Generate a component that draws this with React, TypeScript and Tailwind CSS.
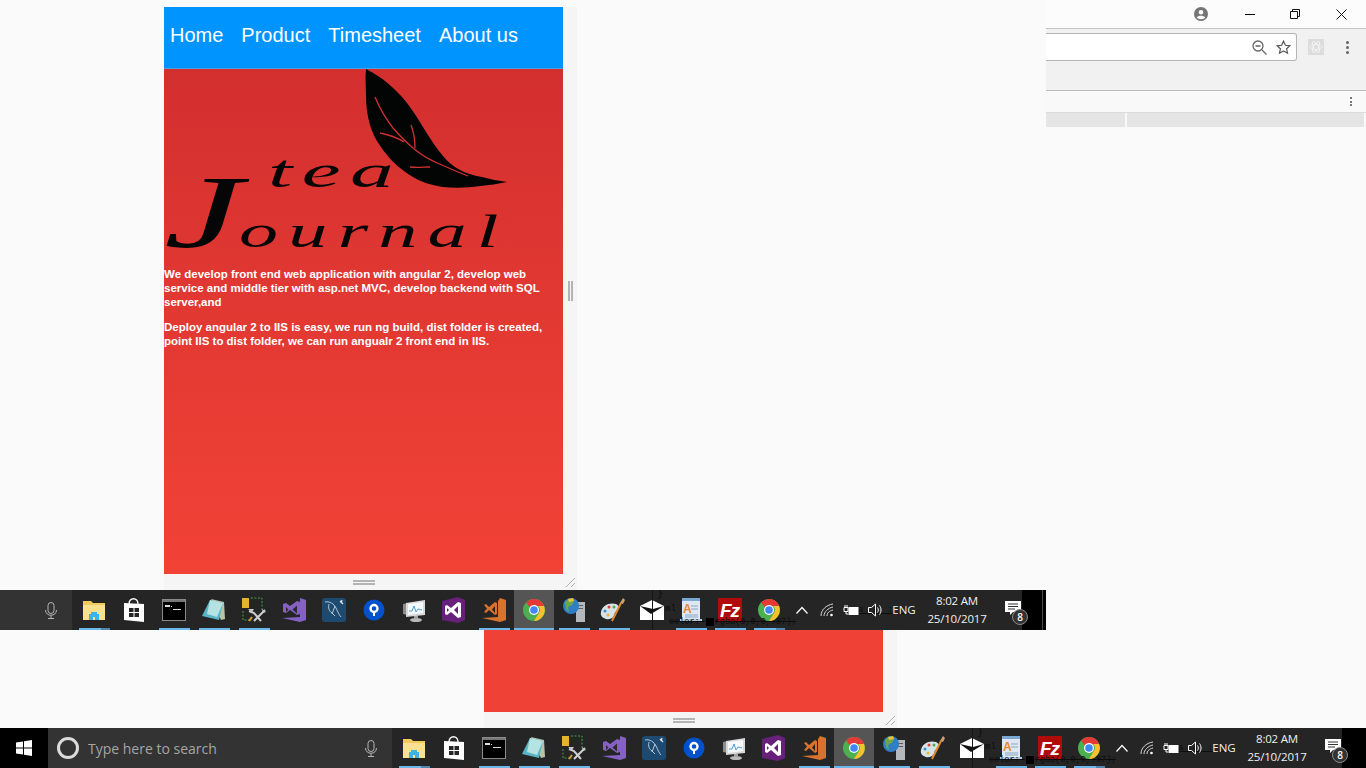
import React from 'react';

const Folder = () => (
  <svg width="24" height="24" viewBox="0 0 24 24">
    <path d="M1 3h8l2 2h12v15H1z" fill="#f3c95a" />
    <path d="M1 7h22v15H1z" fill="#fbe08f" />
    <path d="M7 22v-6h2v-2h6v2h2v6h-4v-3h-2v3z" fill="#3fb2e6" />
  </svg>
);

const Store = () => (
  <svg width="24" height="26" viewBox="0 0 24 26">
    <path d="M7 7c0-7 9-7 9 0" fill="none" stroke="#fff" strokeWidth="1.4" />
    <path d="M2 6l20 1v18L2 23z" fill="#fff" />
    <path d="M7 11h4.500v4H7zM12.500 11H17v4h-4.500zM7 16h4.500v4H7zM12.500 16H17v4h-4.500z" fill="#262626" />
  </svg>
);

const Cmd = () => (
  <svg width="24" height="22" viewBox="0 0 24 22">
    <rect x="0.500" y="0.500" width="23" height="21" fill="#000" stroke="#8a8a8a" />
    <rect x="1" y="1" width="22" height="2" fill="#777" />
    <path d="M3 6h5v2H3zM9 7h1v1H9zM11 10h8v1h-8z" fill="#ddd" />
  </svg>
);

const Notepad = () => (
  <svg width="26" height="24" viewBox="0 0 26 24">
    <path d="M10 1l13 3 1 17-4 1z" fill="#b9c3a5" />
    <path d="M9 2l13 3-4 17L1 18z" fill="#58b5c4" />
    <path d="M9 2l13 3-6 14-10-3z" fill="#b5e2e3" />
  </svg>
);

const Tools = () => (
  <svg width="26" height="26" viewBox="0 0 26 26">
    <rect x="1" y="1" width="7" height="10" fill="#e8b42c" />
    <path d="M10 1h11v12M2 14v9h9" fill="none" stroke="#3fa33f" strokeWidth="1" strokeDasharray="2 1.500" />
    <path d="M8 14l5 2 7 8M24 13l-11 11" fill="none" stroke="#cfcfcf" strokeWidth="2" />
    <path d="M7 12h6l-2 3zM21 12l4 3-3 1z" fill="#c9c9c9" />
    <path d="M11 20l-3 4" stroke="#d79a3a" strokeWidth="2" />
  </svg>
);

const VsPurple = () => (
  <svg width="25" height="24" viewBox="0 0 25 24">
    <path d="M18 0l6 2v20l-6 2L0 20l18-1z" fill="#8661c5" />
    <path d="M1 6l3-1 4 3 7-5 3 1v12l-3 1-7-5-4 3-3-1z" fill="#8661c5" />
    <path d="M4 9v5l2.500-2.500zM15 7.500l-4.500 4 4.500 4z" fill="#2a2a2a" />
  </svg>
);

const MySql = () => (
  <svg width="24" height="24" viewBox="0 0 24 24">
    <rect width="24" height="24" rx="3" fill="#1d4a70" />
    <path d="M3 4c5-1 9 2 11 6s3 7 5 9M7 6c-1 4 0 7 3 9M10 15l3 3M13 8l-3 8" fill="none" stroke="#c9d6df" strokeWidth="0.900" />
    <path d="M18 3l3 3M20 2l-1 3" stroke="#e4e4e4" strokeWidth="1.300" />
  </svg>
);

const SourceTree = () => (
  <svg width="22" height="22" viewBox="0 0 22 22">
    <circle cx="11" cy="11" r="10.500" fill="#0052cc" />
    <circle cx="11" cy="9.500" r="3.500" fill="none" stroke="#fff" strokeWidth="2.400" />
    <rect x="10" y="12" width="2" height="5" fill="#fff" />
  </svg>
);

const PerfMon = () => (
  <svg width="24" height="24" viewBox="0 0 24 24">
    <path d="M1 6l5-1v12l-5-1z" fill="#8c8c8c" />
    <path d="M4 5l19-3v15L4 19z" fill="#d8d8d8" />
    <path d="M6 6l15-2v11L6 17z" fill="#f4f8fb" />
    <path d="M7 13l3 0 2-5 2 6 2-3 4 1" fill="none" stroke="#3c93d0" strokeWidth="0.900" />
    <ellipse cx="14" cy="22" rx="6" ry="2" fill="#b9b9b9" />
    <rect x="12" y="18" width="4" height="3" fill="#a5a5a5" />
  </svg>
);

const VsDark = () => (
  <svg width="24" height="26" viewBox="0 0 24 26">
    <path d="M0 4l16-4 7 3v20l-7 3-16-3z" fill="#68217a" />
    <path d="M16 5l-7 6-4-3-2 1v8l2 1 4-3 7 6 3-1V6zM5 11l2 2-2 2zM16 9v8l-4-4z" fill="#fff" fillRule="evenodd" />
  </svg>
);

const VsOrange = () => (
  <svg width="25" height="24" viewBox="0 0 25 24">
    <path d="M18 0l6 2v20l-6 2L0 20l16-1V3z" fill="#d9722c" />
    <path d="M2 7l2-1 3 3 6-5 2 1v11l-2 1-6-5-3 3-2-1 3-3.500z" fill="#d9722c" />
    <path d="M13 8l-3 3.500 3 3.500z" fill="#252525" />
  </svg>
);

const Chrome = () => (
  <svg width="22" height="22" viewBox="0 0 22 22">
    <circle cx="11" cy="11" r="11" fill="#4caf50" />
    <path d="M11 0a11 11 0 0 1 9.500 5.500L20.500 7H11a4 4 0 0 0-3.500 2L3 3.500A11 11 0 0 1 11 0z" fill="#e53935" />
    <path d="M21 7a11 11 0 0 1-10 15l5-8a5 5 0 0 0-1-7z" fill="#fbc02d" />
    <circle cx="11" cy="11" r="5" fill="#fff" />
    <circle cx="11" cy="11" r="3.800" fill="#4285f4" />
  </svg>
);

const Globe = () => (
  <svg width="24" height="24" viewBox="0 0 24 24">
    <rect x="14" y="4" width="9" height="20" fill="#b4b9bd" />
    <rect x="16" y="7" width="5" height="1" fill="#5a5f63" />
    <rect x="16" y="10" width="5" height="1" fill="#5a5f63" />
    <circle cx="9" cy="8" r="8" fill="#2f7fc4" />
    <path d="M3 4c3-3 7-3 9-1l-2 4-4 2 1 5-3-3z" fill="#6aa84f" />
    <path d="M6 1l5-1 1 3-5 1z" fill="#f2c230" />
  </svg>
);

const Palette = () => (
  <svg width="26" height="26" viewBox="0 0 26 26">
    <path d="M1 15C2 8 10 5 16 7c4 2 3 5 1 7-3 1-2 3-3 5s-5 4-8 3-6-3-5-7z" fill="#d6e4ea" />
    <circle cx="5" cy="14" r="1.500" fill="#3c8dc5" />
    <circle cx="9" cy="10" r="1.500" fill="#d8433a" />
    <circle cx="14" cy="10" r="1.500" fill="#5aa845" />
    <circle cx="8" cy="18" r="1.500" fill="#e7b530" />
    <path d="M12 24L21 6" stroke="#e38a2c" strokeWidth="2" />
    <path d="M20 6l3-5 2 2-2 4z" fill="#c9a36b" />
  </svg>
);

const Mail = () => (
  <svg width="24" height="20" viewBox="0 0 24 20">
    <path d="M0 6l12-6 12 6v14H0z" fill="#fff" />
    <path d="M0 6l11 8 13-8-11 3z" fill="#111" />
  </svg>
);

const WordPad = () => (
  <svg width="22" height="24" viewBox="0 0 22 24">
    <rect x="2" y="0" width="18" height="22" fill="#dfe8f2" />
    <rect x="2" y="0" width="18" height="3" fill="#7aa7d4" />
    <path d="M11 8h7M11 11h7M5 17h13M5 19h13" stroke="#8aa7c4" />
    <text x="3" y="15" fontSize="12" fontWeight="700" fill="#e8862c" fontFamily="'Liberation Sans', sans-serif">A</text>
    <rect x="0" y="21" width="22" height="3" fill="#b4c8dc" />
  </svg>
);

const FileZilla = () => (
  <div className="w-[24px] h-[24px] bg-[#b00b0b] flex items-center justify-center overflow-hidden font-['Liberation_Sans',sans-serif] italic font-bold text-white text-[19px] leading-none tracking-[-1px]">
    Fz
  </div>
);

const Mic = () => (
  <svg width="12" height="17" viewBox="0 0 12 17" fill="none" stroke="#b5b5b5">
    <rect x="3" y="0.500" width="6" height="11" rx="3" />
    <path d="M0.500 8c0 7 11 7 11 0M6 13.500v3M3 16.500h6" />
  </svg>
);

type Cell = {
  icon: React.ReactNode;
  width: string;
  mark?: 'line' | 'split' | 'active';
};

const cells: Cell[] = [
  { icon: <Folder />, width: 'w-[40px]', mark: 'split' },
  { icon: <Store />, width: 'w-[40px]' },
  { icon: <Cmd />, width: 'w-[40px]', mark: 'line' },
  { icon: <Notepad />, width: 'w-[40px]', mark: 'line' },
  { icon: <Tools />, width: 'w-[40px]', mark: 'line' },
  { icon: <VsPurple />, width: 'w-[40px]' },
  { icon: <MySql />, width: 'w-[40px]' },
  { icon: <SourceTree />, width: 'w-[40px]' },
  { icon: <PerfMon />, width: 'w-[40px]' },
  { icon: <VsDark />, width: 'w-[40px]' },
  { icon: <VsOrange />, width: 'w-[40px]', mark: 'line' },
  { icon: <Chrome />, width: 'w-[40px]', mark: 'active' },
  { icon: <Globe />, width: 'w-[40px]', mark: 'line' },
  { icon: <Palette />, width: 'w-[38px]', mark: 'line' },
  { icon: <Mail />, width: 'w-[39px]' },
  { icon: <WordPad />, width: 'w-[39px]', mark: 'line' },
  { icon: <FileZilla />, width: 'w-[39px]', mark: 'line' },
  { icon: <Chrome />, width: 'w-[39px]', mark: 'split' },
];

const TaskbarCell = ({ cell }: { cell: Cell }) => (
  <div
    className={`${cell.width} relative h-[40px] shrink-0 flex items-center justify-center ${
      cell.mark === 'active' ? 'bg-[#555555]' : ''
    }`}
  >
    {cell.icon}
    {cell.mark === 'line' && (
      <span className="absolute bottom-0 left-[5px] w-[31px] h-[2px] bg-[#6bb6ea]" />
    )}
    {cell.mark === 'split' && (
      <span className="absolute bottom-0 left-[5px] w-[31px] h-[2px] bg-[#6bb6ea] border-r-[9px] border-[#4f87ae]" />
    )}
    {cell.mark === 'active' && (
      <span className="absolute bottom-0 left-0 w-full h-[2px] bg-[#6bb6ea]" />
    )}
  </div>
);

const Tray = () => (
  <div className="relative z-10 ml-[1px] flex items-center h-[40px] text-white font-['Open_Sans',sans-serif] text-[11.5px]">
    <div className="w-[26px] flex justify-center">
      <svg width="12" height="8" viewBox="0 0 12 8" fill="none" stroke="#fff" strokeWidth="1.200">
        <path d="M0.500 7.500L6 1.500l5.500 6" />
      </svg>
    </div>
    <div className="w-[24px] flex justify-center">
      <svg width="14" height="14" viewBox="0 0 14 14" fill="none" stroke="#d8d8d8">
        <path d="M1 13C1 7 6 2 13 1M4 13c0-4 4-8 9-9M7 13c0-3 2-5 6-6" />
        <circle cx="11.500" cy="12" r="1.300" fill="#fff" stroke="none" />
      </svg>
    </div>
    <div className="w-[24px] flex justify-center">
      <svg width="16" height="12" viewBox="0 0 16 12" fill="none" stroke="#fff">
        <path d="M1 3.500h4v4H1zM2 1v2.500M4 1v2.500M3 7.500V10h2" />
        <rect x="6" y="3.500" width="9" height="7" fill="#fff" />
      </svg>
    </div>
    <div className="w-[24px] flex justify-center">
      <svg width="15" height="14" viewBox="0 0 15 14" fill="none" stroke="#fff">
        <path d="M0.500 4.500h3l4-3.500v12l-4-3.500h-3zM9.500 4.500c1 1.500 1 3.500 0 5M11.500 2.500c2 2.500 2 6.500 0 9" />
      </svg>
    </div>
    <div className="w-[34px] text-center text-[#f0f0f0]">ENG</div>
    <div className="w-[72px] text-center leading-[18px] tracking-[-0.2px] text-[#f0f0f0]">
      <div>8:02 AM</div>
      <div>25/10/2017</div>
    </div>
    <div className="relative w-[29px] h-[40px] flex items-center pl-[12px]">
      <svg width="16" height="14" viewBox="0 0 16 14" className="-mt-[4px]">
        <path d="M0 0h16v11H8l-3 3v-3H0z" fill="#fff" />
        <path d="M3 3h10M3 5.500h10M3 8h7" stroke="#333" />
      </svg>
      <span className="absolute left-[19px] top-[19px] w-[16px] h-[16px] rounded-full bg-[#333333] border border-[#8a8a8a] flex items-center justify-center text-[10px] leading-none font-semibold">
        8
      </span>
    </div>
  </div>
);

// the page's taskbar has start button and search box, the one in the
// screenshot behind shows only the tail of the search box
const Taskbar = ({ inner }: { inner?: boolean }) => (
  <div className={`${inner ? 'w-[1046px]' : 'w-[1366px]'} relative h-[40px] shrink-0 bg-[#252525] flex overflow-hidden`}>
    {inner ? (
      <div className="w-[72px] h-[40px] bg-[#333333] flex items-center justify-end pr-[15px]">
        <Mic />
      </div>
    ) : (
      <>
        <div className="w-[48px] h-[40px] bg-black flex items-center justify-center">
          <svg width="16" height="16" viewBox="0 0 16 16" fill="#fff">
            <path d="M0 2.500l7-1v6H0zM8 1.300l8-1.300v7.500H8zM0 8.500h7v6l-7-1zM8 8.500h8V16l-8-1.300z" />
          </svg>
        </div>
        <div className="w-[344px] h-[40px] bg-[#333333] flex items-center pl-[9px] pr-[15px]">
          <span className="w-[22px] h-[22px] rounded-full border-[3px] border-[#dcdcdc]" />
          <span className="ml-[9px] flex-1 font-['Open_Sans',sans-serif] text-[14px] text-[#a5a5a5]">
            Type here to search
          </span>
          <Mic />
        </div>
      </>
    )}
    <div className="relative flex-1 flex pl-[2px]">
      {cells.map((cell, i) => (
        <TaskbarCell key={i} cell={cell} />
      ))}
      <Tray />
      <div className="flex-1 bg-black" />

      {/* text of the window behind, showing through the bar */}
      <div className="absolute left-[580px] top-0 bottom-0 w-px bg-[#151515]" />
      <span className="absolute left-[585px] top-[-3px] font-['Liberation_Mono',monospace] text-[10px] text-[#0d0d0d]">{'}'}</span>
      <span className="absolute left-[593px] top-[13px] font-['Liberation_Mono',monospace] text-[9px] text-[#0d0d0d]">ml</span>
      <div className="absolute left-[597px] top-[26px] flex items-center font-['Liberation_Mono',monospace] text-[8.500px] leading-[12px] text-[#0d0d0d] line-through">
        color:&nbsp;<span className="w-[8px] h-[8px] bg-black mx-[1px]" />rgba(0,0,0,.87);
      </div>
      <span className="absolute left-[786px] top-[14px] font-['Liberation_Mono',monospace] text-[9px] text-[#0d0d0d] underline tracking-[2px]">a.a : 1</span>
    </div>
  </div>
);

const Grip = () => (
  <svg width="11" height="11" viewBox="0 0 11 11" fill="none" stroke="#b0b0b0">
    <path d="M1 10L10 1M6 10l4-4" />
  </svg>
);

// preview pane with its resize handles
const Pane = ({ sideGrip, children }: { sideGrip?: boolean; children: React.ReactNode }) => (
  <div className="w-[413px] flex flex-col bg-[#f5f5f5]">
    <div className="flex">
      <div className="w-[399px]">{children}</div>
      <div className="flex-1 flex items-center justify-center">
        {sideGrip && <span className="w-[5px] h-[20px] border-x-2 border-[#b4b4b4]" />}
      </div>
    </div>
    <div className="h-[16px] flex items-center">
      <div className="w-[399px] flex justify-center">
        <span className="w-[22px] h-[5px] border-y-2 border-[#b4b4b4]" />
      </div>
      <div className="flex-1 flex justify-center">
        <Grip />
      </div>
    </div>
  </div>
);

const Logo = () => (
  <svg width="399" height="198" viewBox="0 0 399 198" className="block overflow-visible">
    <path
      d="M202 0C218 8 232 20 243 34C256 51 266 72 279 87C288 98 300 105 318 108C326 110 335 112 343 113C334 115 325 116 316 117C303 119 290 119 279 118C267 116 257 113 249 108C238 101 230 95 223 86C214 75 209 66 206 56C203 46 202 36 202 26C202 17 201 9 202 0Z"
      fill="#030505"
    />
    <path
      d="M211 28C216 40 222 50 229 59C236 67 243 74 249 79C258 87 268 92 278 96C287 100 296 104 304 107"
      fill="none"
      stroke="#d33030"
      strokeWidth="1.300"
    />
    <path d="M216 64C226 66 234 69 240 73M247 56C250 64 251 72 251 79M246 98C253 99 260 98 266 98" fill="none" stroke="#d33030" strokeWidth="1.300" />
    <g fill="#060606" fontFamily="'Liberation Serif', serif" fontStyle="italic">
      <text transform="translate(104,118) scale(1.900,1)" fontSize="46" letterSpacing="5">
        tea
      </text>
      <text transform="translate(0,178) scale(1.700,1)" fontSize="46" letterSpacing="6">
        <tspan fontSize="104">J</tspan>
        <tspan dx="-8">ournal</tspan>
      </text>
    </g>
  </svg>
);

const navLinks = ['Home', 'Product', 'Timesheet', 'About us'];

const Preview = () => (
  <div className="h-[567px] flex flex-col font-['Liberation_Sans',sans-serif] text-white">
    <nav className="h-[62px] shrink-0 bg-[#0094ff] border-b border-[#4a9fe0] flex items-center gap-[18px] pl-[6px] text-[20px] pb-[6px]">
      {navLinks.map((link) => (
        <a key={link}>{link}</a>
      ))}
    </nav>
    <main className="flex-1 bg-gradient-to-b from-[#d32f2f] to-[#f24236]">
      <Logo />
      <p className="text-[11.500px] leading-[14px] font-bold mb-[11px]">
        We develop front end web application with angular 2, develop web service and middle tier with asp.net MVC, develop backend with SQL server,and
      </p>
      <p className="text-[11.500px] leading-[14px] font-bold">
        Deploy angular 2 to IIS is easy, we run ng build, dist folder is created, point IIS to dist folder, we can run angualr 2 front end in IIS.
      </p>
    </main>
  </div>
);

const BrowserEdge = () => (
  <div className="w-[320px] flex flex-col">
    <div className="h-[29px] bg-[#fcfcfc] border-b border-[#c4c4c4] flex items-center">
      <div className="ml-[148px] w-[14px] h-[14px]">
        <svg width="14" height="14" viewBox="0 0 14 14">
          <circle cx="7" cy="7" r="7" fill="#757575" />
          <circle cx="7" cy="5.200" r="2.300" fill="#fcfcfc" />
          <path d="M2.700 10.500c1.500-2.400 7-2.400 8.600 0-2 2.300-6.600 2.300-8.600 0z" fill="#fcfcfc" />
        </svg>
      </div>
      <div className="ml-[37px] w-[10px] h-px bg-black" />
      <svg width="10" height="10" viewBox="0 0 10 10" fill="none" stroke="#111" className="ml-[35px]">
        <path d="M0.500 2.500h7v7h-7zM2.500 2.500v-2h7v7h-2" />
      </svg>
      <svg width="11" height="11" viewBox="0 0 11 11" fill="none" stroke="#111" className="ml-[36px]">
        <path d="M0.500 0.500l10 10M10.500 0.500l-10 10" />
      </svg>
    </div>
    <div className="h-[62px] bg-[#f1f1f1] border-b border-[#bcbcbc]">
      <div className="flex items-center h-[28px] mt-[4px]">
        <div className="w-[251px] h-[28px] bg-white border border-l-0 border-[#b4b4b4] rounded-r-[3px] flex items-center justify-end pr-[5px] gap-[9px]">
          <svg width="15" height="15" viewBox="0 0 15 15" fill="none" stroke="#666" strokeWidth="1.300">
            <circle cx="6" cy="6" r="5" />
            <path d="M3.500 6h5M10 10l4.500 4.500" />
          </svg>
          <svg width="15" height="15" viewBox="0 0 15 15" fill="none" stroke="#555" strokeWidth="1.200">
            <path d="M7.500 1.200l1.900 4.100 4.500.5-3.300 3 .9 4.400-4-2.200-4 2.200.9-4.400-3.300-3 4.500-.5z" />
          </svg>
        </div>
        <div className="ml-[11px] w-[16px] h-[16px] bg-[#dcdcdc] flex items-center justify-center">
          <svg width="14" height="14" viewBox="0 0 14 14" fill="none" stroke="#f5f5f5" strokeWidth="0.800">
            <ellipse cx="7" cy="7" rx="6" ry="2.500" />
            <ellipse cx="7" cy="7" rx="6" ry="2.500" transform="rotate(60 7 7)" />
            <ellipse cx="7" cy="7" rx="6" ry="2.500" transform="rotate(120 7 7)" />
          </svg>
        </div>
        <div className="ml-[22px] flex flex-col gap-[2px]">
          <span className="w-[3px] h-[3px] rounded-full bg-[#666]" />
          <span className="w-[3px] h-[3px] rounded-full bg-[#666]" />
          <span className="w-[3px] h-[3px] rounded-full bg-[#666]" />
        </div>
      </div>
    </div>
    <div className="h-[22px] bg-[#f9f9f9] border-b border-[#dcdcdc] flex items-center justify-end pr-[14px]">
      <div className="flex flex-col gap-[1.500px]">
        <span className="w-[2px] h-[2px] bg-[#777]" />
        <span className="w-[2px] h-[2px] bg-[#777]" />
        <span className="w-[2px] h-[2px] bg-[#777]" />
      </div>
    </div>
    <div className="h-[14px] w-[318px] flex gap-[2px]">
      <div className="w-[79px] bg-[#e5e5e5]" />
      <div className="flex-1 bg-[#e5e5e5]" />
    </div>
  </div>
);

export default function App() {
  return (
    <div className="w-[1366px] h-[768px] overflow-hidden bg-[#fafafa] flex flex-col">
      <div className="h-[728px] flex">
        <div className="w-[1046px] flex flex-col">
          <div className="h-[590px] pl-[164px] pt-[7px]">
            <Pane sideGrip>
              <Preview />
            </Pane>
          </div>
          <div className="relative">
            <Taskbar inner />
            <span className="absolute right-[3px] top-0 bottom-0 w-px bg-[#4a4a4a]" />
          </div>
          <div className="pl-[484px]">
            <Pane>
              <div className="h-[82px] bg-[#ef4136]" />
            </Pane>
          </div>
        </div>
        <BrowserEdge />
      </div>
      <Taskbar />
    </div>
  );
}
